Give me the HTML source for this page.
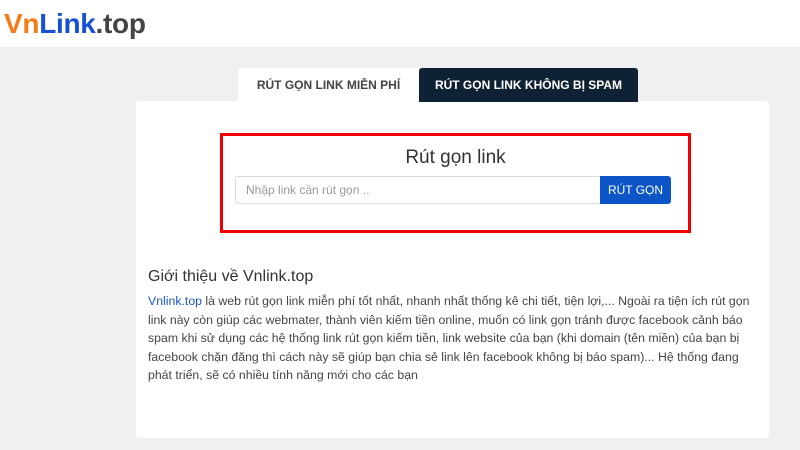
<!DOCTYPE html>
<html><head><meta charset="utf-8"><style>
*{margin:0;padding:0;box-sizing:border-box}
body{width:800px;height:450px;overflow:hidden;background:#f0f0f0;font-family:"Liberation Sans",sans-serif;position:relative}
.hdr{position:absolute;left:0;top:0;width:800px;height:47px;background:#fff}
.logo{position:absolute;left:4px;top:8px;font-size:28px;font-weight:bold;letter-spacing:-0.3px}
.card{position:absolute;left:136px;top:101px;width:633px;height:337px;background:#fff;border-radius:3px}
.tab1{position:absolute;left:238px;top:68px;width:181px;height:34px;background:#fff;border-radius:3px 3px 0 0;font-size:12px;font-weight:bold;color:#444;text-align:center;line-height:34px}
.tab2{position:absolute;left:419px;top:68px;width:219px;height:34px;background:#0f2234;border-radius:3px 3px 0 0;font-size:12px;font-weight:bold;color:#fff;text-align:center;line-height:34px}
.red{position:absolute;left:220px;top:133px;width:471px;height:100px;border:3px solid #e00}
.title{position:absolute;left:220px;width:471px;top:147px;text-align:center;font-size:19px;color:#333}
.inp{position:absolute;left:235px;top:176px;width:366px;height:28px;border:1px solid #ddd;border-radius:3px 0 0 3px;font-size:12px;color:#999;padding-left:10px;line-height:26px}
.btn{position:absolute;left:600px;top:176px;width:71px;height:28px;background:#0b55c6;color:#fff;font-size:12px;text-align:center;line-height:28px;border-radius:0 3px 3px 0}
h3{position:absolute;left:148px;top:268px;font-size:16px;font-weight:normal;color:#333}
p{position:absolute;left:148px;top:292px;width:615px;font-size:12.3px;line-height:18.5px;color:#444}
a{color:#1a56c8;text-decoration:none}
</style></head><body>
<div class="hdr"><div class="logo"><span style="color:#f57c14">Vn</span><span style="color:#1650d6">Link</span><span style="color:#444">.top</span></div></div>
<div class="card"></div>
<div class="tab1">RÚT GỌN LINK MIỄN PHÍ</div>
<div class="tab2">RÚT GỌN LINK KHÔNG BỊ SPAM</div>
<div class="red"></div>
<div class="title">Rút gọn link</div>
<div class="inp">Nhập link cần rút gọn ..</div>
<div class="btn">RÚT GỌN</div>
<h3>Giới thiệu về Vnlink.top</h3>
<p><a>Vnlink.top</a> là web rút gọn link miễn phí tốt nhất, nhanh nhất thống kê chi tiết, tiện lợi,... Ngoài ra tiện ích rút gọn link này còn giúp các webmater, thành viên kiếm tiền online, muốn có link gọn tránh được facebook cảnh báo spam khi sử dụng các hệ thống link rút gọn kiếm tiền, link website của bạn (khi domain (tên miền) của bạn bị facebook chặn đăng thì cách này sẽ giúp bạn chia sẻ link lên facebook không bị báo spam)... Hệ thống đang phát triển, sẽ có nhiều tính năng mới cho các bạn</p>
</body></html>
